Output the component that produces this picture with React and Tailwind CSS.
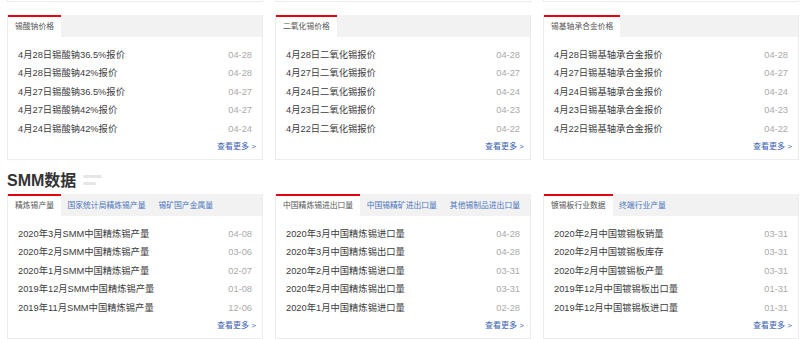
import React from 'react';

const topCards = [
  {
    tabs: ['锡酸钠价格'],
    rows: [
      ['4月28日锡酸钠36.5%报价', '04-28'],
      ['4月28日锡酸钠42%报价', '04-28'],
      ['4月27日锡酸钠36.5%报价', '04-27'],
      ['4月27日锡酸钠42%报价', '04-27'],
      ['4月24日锡酸钠42%报价', '04-24'],
    ],
  },
  {
    tabs: ['二氧化锡价格'],
    rows: [
      ['4月28日二氧化锡报价', '04-28'],
      ['4月27日二氧化锡报价', '04-27'],
      ['4月24日二氧化锡报价', '04-24'],
      ['4月23日二氧化锡报价', '04-23'],
      ['4月22日二氧化锡报价', '04-22'],
    ],
  },
  {
    tabs: ['锡基轴承合金价格'],
    rows: [
      ['4月28日锡基轴承合金报价', '04-28'],
      ['4月27日锡基轴承合金报价', '04-27'],
      ['4月24日锡基轴承合金报价', '04-24'],
      ['4月23日锡基轴承合金报价', '04-23'],
      ['4月22日锡基轴承合金报价', '04-22'],
    ],
  },
];

const smmCards = [
  {
    tabs: ['精炼锡产量', '国家统计局精炼锡产量', '锡矿国产金属量'],
    rows: [
      ['2020年3月SMM中国精炼锡产量', '04-08'],
      ['2020年2月SMM中国精炼锡产量', '03-06'],
      ['2020年1月SMM中国精炼锡产量', '02-07'],
      ['2019年12月SMM中国精炼锡产量', '01-08'],
      ['2019年11月SMM中国精炼锡产量', '12-06'],
    ],
  },
  {
    tabs: ['中国精炼锡进出口量', '中国锡精矿进出口量', '其他锡制品进出口量'],
    rows: [
      ['2020年3月中国精炼锡进口量', '04-28'],
      ['2020年3月中国精炼锡出口量', '04-28'],
      ['2020年2月中国精炼锡进口量', '03-31'],
      ['2020年2月中国精炼锡出口量', '03-31'],
      ['2020年1月中国精炼锡进口量', '02-28'],
    ],
  },
  {
    tabs: ['镀锡板行业数据', '终端行业产量'],
    rows: [
      ['2020年2月中国镀锡板销量', '03-31'],
      ['2020年2月中国镀锡板库存', '03-31'],
      ['2020年2月中国镀锡板产量', '03-31'],
      ['2019年12月中国镀锡板出口量', '01-31'],
      ['2019年12月中国镀锡板进口量', '01-31'],
    ],
  },
];

const Card = ({ tabs, rows }) => (
  <div className="border border-[#ececec] border-t-0 bg-white">
    <div className="flex h-[22px] overflow-hidden whitespace-nowrap bg-[#f2f2f2]">
      {tabs.map((t, i) =>
        i === 0 ? (
          <div
            key={t}
            className="flex shrink-0 items-center border-t-2 border-[#e60012] bg-white px-[7px] text-[7.8px] text-[#555]"
          >
            {t}
          </div>
        ) : (
          <div key={t} className="flex shrink-0 items-center px-[6.5px] pt-[2px] text-[7.8px] text-[#4a74bd]">
            {t}
          </div>
        )
      )}
    </div>
    <div className="pl-[10px] pr-[6px] pt-[9px] pb-[4px]">
      {rows.map(([title, date], i) => (
        <div key={i} className="mr-[4px] flex justify-between text-[9.3px] leading-[18.4px]">
          <span className="text-[#3c3c3c]">{title}</span>
          <span className="text-[#aaa]">{date}</span>
        </div>
      ))}
      <div className="text-right text-[8px] leading-[17px] text-[#3b64b3]">
        查看更多 &gt;
      </div>
    </div>
  </div>
);

export default function App() {
  return (
    <div className="w-[800px] h-[339px] overflow-hidden bg-white pl-[7px] pr-[1px] font-['Liberation_Sans','Noto_Sans_CJK_SC',sans-serif]">
      {/* bottoms of the cards above */}
      <div className="grid grid-cols-3 gap-x-[12px]">
        <div className="h-[2px] border-x border-b border-[#ececec]" />
        <div className="h-[2px] border-x border-b border-[#ececec]" />
        <div className="h-[2px] border-x border-b border-[#ececec]" />
      </div>

      <div className="mt-[13px] grid grid-cols-3 gap-x-[12px]">
        {topCards.map((c, i) => (
          <Card key={i} {...c} />
        ))}
      </div>

      <div className="flex h-[34px] items-start pt-[11px]">
        <h2 className="text-[16px] font-bold leading-[20px] text-[#333]">SMM数据</h2>
        <div className="ml-[7px] mt-[4px] flex flex-col gap-[4px]">
          <div className="h-[3px] w-[19px] rounded-full bg-[#e6e6e6]" />
          <div className="h-[3px] w-[13px] rounded-full bg-[#e6e6e6]" />
        </div>
      </div>

      <div className="grid grid-cols-3 gap-x-[12px]">
        {smmCards.map((c, i) => (
          <Card key={i} {...c} />
        ))}
      </div>
    </div>
  );
}
